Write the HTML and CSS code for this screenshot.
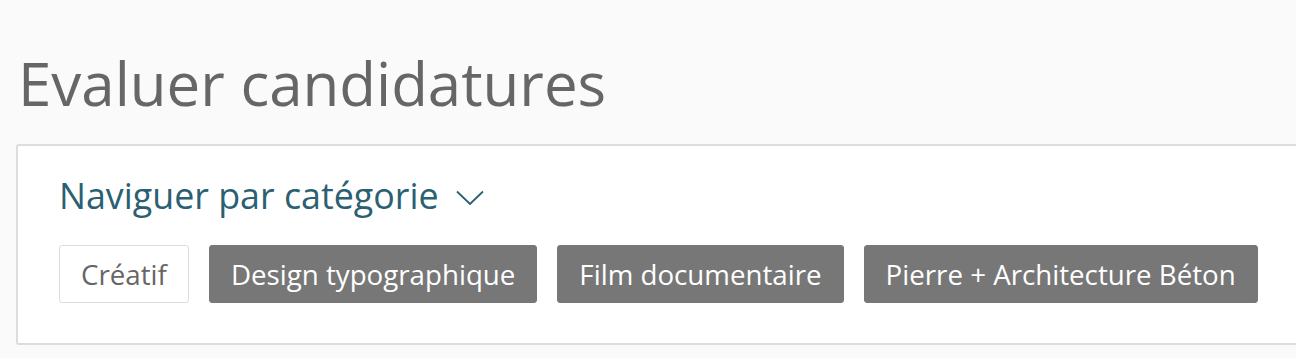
FILE: index.html
```html
<!DOCTYPE html>
<html>
<head>
  <meta charset="UTF-8">
  <title>Evaluer candidatures</title>
  <link rel="stylesheet" href="styles.css">
</head>
<body>
  <div class="page">
    <h1 class="title">Evaluer candidatures</h1>

    <div class="card">
      <div class="browse">
        <span>Naviguer par catégorie</span>
        <svg class="chevron" width="28" height="16" viewBox="0 0 28 16">
          <polyline points="1,1.5 14,14 27,1.5" fill="none" stroke="#2b5f72" stroke-width="1.8"/>
        </svg>
      </div>
      <div class="tags">
        <a class="tag">Créatif</a>
        <a class="tag active">Design typographique</a>
        <a class="tag active">Film documentaire</a>
        <a class="tag active">Pierre + Architecture Béton</a>
      </div>
    </div>
  </div>
</body>
</html>
```

FILE: styles.css
```css
body {
  margin: 0;
  background: #fafafa;
  font-family: 'Open Sans', 'Noto Sans', sans-serif;
}
.page {
  padding: 0 0 0 16px;
  overflow: hidden;
  height: 358px;
}
.title {
  margin: 0;
  padding-top: 43px;
  padding-left: 2px;
  font-size: 60px;
  font-weight: 400;
  line-height: 80px;
  color: #666;
}
.card {
  margin-top: 21px;
  margin-right: -20px;
  background: #fff;
  border: 2px solid #ddd;
  border-radius: 3px;
  padding: 29px 41px 40px;
}
.browse {
  display: flex;
  align-items: center;
  color: #2b5f72;
  font-size: 35.8px;
  line-height: 40px;
}
.chevron {
  margin-left: 17px;
  margin-top: 6px;
}
.tags {
  display: flex;
  gap: 20px;
  margin-top: 30px;
}
.tag {
  display: block;
  height: 56px;
  line-height: 56px;
  padding: 0 21px;
  font-size: 27.7px;
  color: #666;
  background: #fff;
  border: 1px solid #ddd;
  border-radius: 3px;
}
.tag.active {
  background: #777;
  border-color: #777;
  color: #fff;
}
```
